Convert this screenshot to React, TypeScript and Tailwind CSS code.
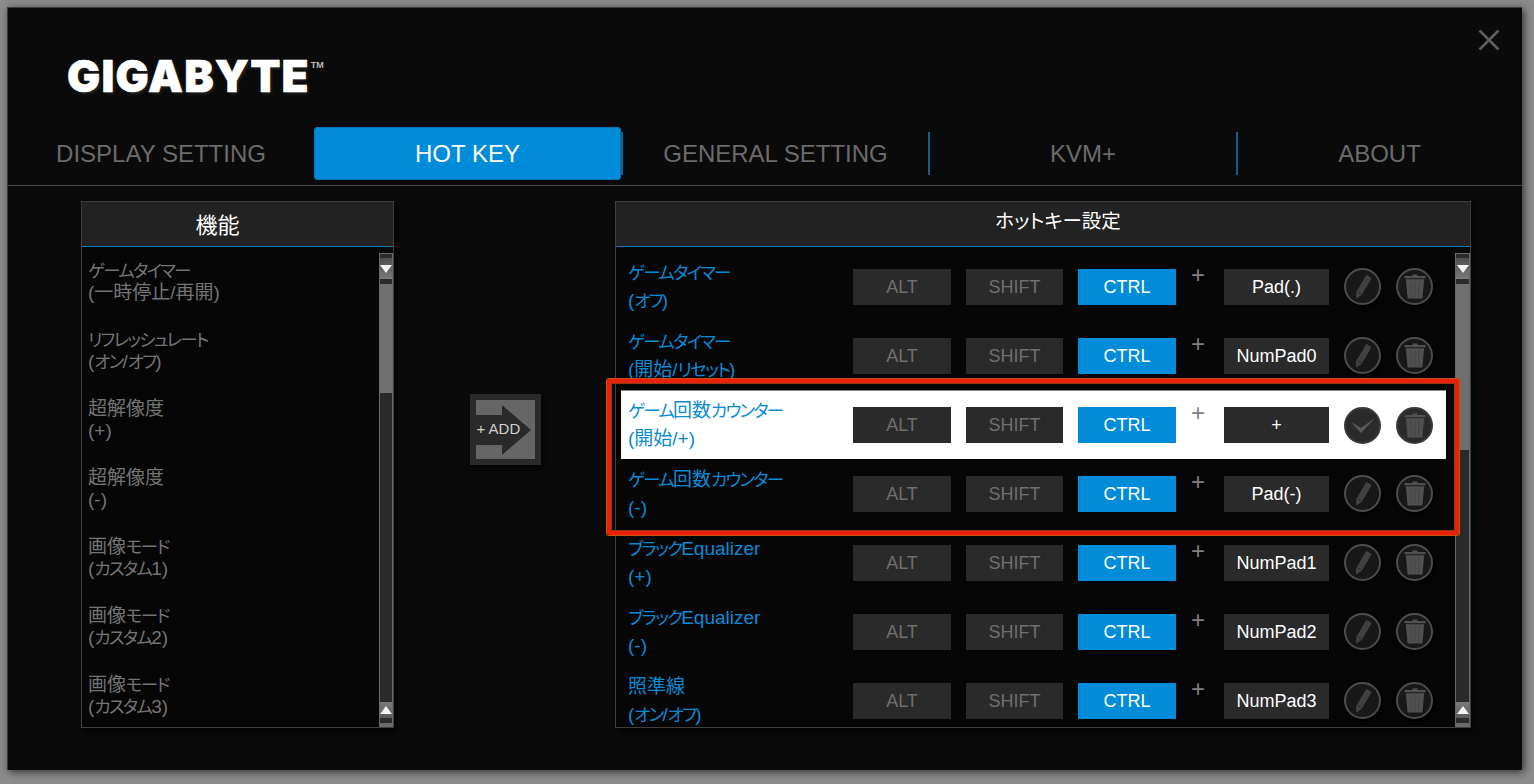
const CJK = "font-['Liberation_Sans','Noto_Sans_CJK_JP',sans-serif] [font-feature-settings:'palt']";

const functions = [
  ['ゲームタイマー', '(一時停止/再開)'],
  ['リフレッシュレート', '(オン/オフ)'],
  ['超解像度', '(+)'],
  ['超解像度', '(-)'],
  ['画像モード', '(カスタム1)'],
  ['画像モード', '(カスタム2)'],
  ['画像モード', '(カスタム3)'],
];

const hotkeys = [
  { title: 'ゲームタイマー', sub: '(オフ)', key: 'Pad(.)' },
  { title: 'ゲームタイマー', sub: '(開始/リセット)', key: 'NumPad0' },
  { title: 'ゲーム回数カウンター', sub: '(開始/+)', key: '+', editing: true },
  { title: 'ゲーム回数カウンター', sub: '(-)', key: 'Pad(-)' },
  { title: 'ブラックEqualizer', sub: '(+)', key: 'NumPad1' },
  { title: 'ブラックEqualizer', sub: '(-)', key: 'NumPad2' },
  { title: '照準線', sub: '(オン/オフ)', key: 'NumPad3' },
];

// kana in the original font runs much narrower than the kanji
function Jp({ text }: { text: string }) {
  return (
    <span>
      {text.split(/([ァ-ヶー]+)/).map((part, i) =>
        i % 2 ? (
          <span key={i} className="text-[17.5px] tracking-[-1.7px]">
            {part}
          </span>
        ) : (
          part
        ),
      )}
    </span>
  );
}

function Tab({ label, active, width }: { label: string; active?: boolean; width: string }) {
  return (
    <div
      className={`flex h-[53px] items-center justify-center text-[24px] ${width} ${
        active
          ? 'rounded-[3px] border border-[#0a74b4] bg-[#008cd8] text-white'
          : 'text-[#6b6b6b]'
      }`}
    >
      {label}
    </div>
  );
}

function Divider() {
  return <div className="h-[43px] w-[2px] shrink-0 bg-[#125f8c]" />;
}

function Arrow({ up }: { up?: boolean }) {
  return (
    <svg width="12" height="8" viewBox="0 0 12 8">
      <path d={up ? 'M6 0 L12 8 L0 8 Z' : 'M0 0 L12 0 L6 8 Z'} fill="#f4f4f4" />
    </svg>
  );
}

function Scrollbar({ thumb, width }: { thumb: string; width: string }) {
  return (
    <div className={`mt-[6px] flex shrink-0 flex-col border border-b-0 border-[#6a6a6a] bg-[#2a2a2a] ${width}`}>
      <div className="h-[4px] bg-[#2b2b2b]" />
      <div className="flex h-[21px] items-center justify-center bg-gradient-to-b from-[#4e4e4e] to-[#7a7a7a]">
        <Arrow />
      </div>
      <div className="h-[5px] bg-[#2b2b2b]" />
      <div className={`bg-[#6f6f6f] ${thumb}`} />
      <div className="flex-1" />
      <div className="flex h-[16px] items-center justify-center bg-gradient-to-b from-[#7a7a7a] to-[#5a5a5a]">
        <Arrow up />
      </div>
      <div className="h-[5px] bg-[#2b2b2b]" />
      <div className="h-[4px] bg-[#6a6a6a]" />
    </div>
  );
}

function PencilIcon() {
  return (
    <svg width="18" height="25" viewBox="0 0 18 25">
      <path d="M12.5 1.5 L17 4.2 L7.5 20.5 L2.5 24 L2.8 18 Z" fill="#414141" stroke="#484848" strokeWidth="0.8" />
      <path d="M4.2 18 L7.2 19.8" stroke="#242424" strokeWidth="1" />
    </svg>
  );
}

function TrashIcon() {
  return (
    <svg width="22" height="25" viewBox="0 0 22 25">
      <path d="M8.5 0.5 H13.5 V2 H21.5 V4.2 H0.5 V2 H8.5 Z" fill="#505050" />
      <path d="M1.8 5.2 H20.2 L18.4 24.5 H3.6 Z" fill="#505050" />
      <path d="M6.8 7.5 L7.5 23 M11 7.5 V23 M15.2 7.5 L14.5 23" stroke="#454545" strokeWidth="1" />
    </svg>
  );
}

function CheckIcon() {
  return (
    <svg width="26" height="17" viewBox="0 0 26 17">
      <path d="M1 5 L11 16 L25 1 L11 11 Z" fill="#5a5a5a" />
    </svg>
  );
}

function RoundButton({ filled, children }: { filled?: boolean; children: React.ReactNode }) {
  return (
    <div
      className={`flex h-[37px] w-[37px] shrink-0 items-center justify-center rounded-full border-2 ${
        filled
          ? 'border-[#3a3a3a] bg-[#2a2a2a]'
          : 'border-[#4c4c4c] bg-[#181818] shadow-[2px_3px_5px_rgba(0,0,0,0.7)]'
      }`}
    >
      {children}
    </div>
  );
}

function KeyCap({ label, active, width, bright }: { label: string; active?: boolean; width: string; bright?: boolean }) {
  return (
    <div
      className={`flex h-[36px] shrink-0 items-center justify-center pt-[1px] text-[18px] ${width} ${
        active ? 'bg-[#008cd8] text-white' : bright ? 'bg-[#2a2a2a] text-white' : 'bg-[#2a2a2a] text-[#6f6f6f]'
      }`}
    >
      {label}
    </div>
  );
}

export default function App() {
  return (
    <div className={`h-[784px] w-[1534px] overflow-hidden bg-[#8b8b8b] p-[7px] ${CJK}`}>
      <div className="relative flex h-[763px] w-[1515px] flex-col border-t border-l border-[#3c3c3c] bg-[#0a0a0a] shadow-[2px_2px_8px_rgba(0,0,0,0.65)]">
        {/* Close */}
        <svg className="absolute top-[21px] right-[22px]" width="22" height="22" viewBox="0 0 22 22">
          <path d="M1.5 1.5 L20.5 20.5 M20.5 1.5 L1.5 20.5" stroke="#5f5f5f" strokeWidth="2.6" />
        </svg>

        {/* Logo */}
        <div className="flex h-[119px] items-start pt-[46px] pl-[59px]">
          <span className="font-['Inter',sans-serif] text-[44px] leading-[44px] font-black tracking-[1.2px] text-white [-webkit-text-stroke:0.6px_white] [text-shadow:2px_2px_3px_rgba(255,255,255,0.1)]">
            GIGABYTE
          </span>
          <span className="mt-[7px] ml-[1px] font-['Liberation_Sans',sans-serif] text-[9px] leading-[9px] font-bold text-[#bbbbbb]">
            TM
          </span>
        </div>

        {/* Tabs */}
        <div className="flex items-center">
          <Tab label="DISPLAY SETTING" width="w-[306px]" />
          <Tab label="HOT KEY" active width="w-[307px]" />
          <Divider />
          <Tab label="GENERAL SETTING" width="w-[305px]" />
          <Divider />
          <Tab label="KVM+" width="w-[306px]" />
          <Divider />
          <Tab label="ABOUT" width="w-[283px]" />
        </div>
        <div className="mt-[5px] h-px w-full bg-[#4a4a4a]" />

        {/* Panels */}
        <div className="mt-[15px] flex pl-[73px]">
          {/* Function list */}
          <div className="flex h-[527px] w-[313px] shrink-0 flex-col border border-[#3f3f3f] shadow-[3px_3px_6px_rgba(0,0,0,0.7)]">
            <div className="flex h-[45px] shrink-0 items-center justify-center border-b border-[#0e78b8] bg-[#222222] pt-[3px] pr-[40px] text-[22px] text-white">
              機能
            </div>
            <div className="flex min-h-0 flex-1">
              <div className="min-w-0 flex-1 overflow-hidden bg-[#060606]">
                {functions.map(([title, sub], i) => (
                  <div key={i} className="flex h-[69px] flex-col justify-center pt-[1px] pl-[6px] text-[19px] leading-[22.5px] text-[#747474]">
                    <Jp text={title} />
                    <Jp text={sub} />
                  </div>
                ))}
              </div>
              <Scrollbar thumb="h-[109px]" width="w-[14px]" />
            </div>
          </div>

          {/* Add button */}
          <div className="flex w-[221px] shrink-0 justify-center pt-[193px] pl-[1px]">
            <div className="relative h-[71px] w-[71px] bg-[#2a2a2a] shadow-[2px_3px_5px_rgba(0,0,0,0.7)]">
              <svg className="absolute top-[6px] left-[6px]" width="59" height="59" viewBox="0 0 59 59">
                <rect width="59" height="59" fill="#666666" />
                <path d="M0 15 H26 V5 L55 30 L26 55 V45 H0 Z" fill="#2a2a2a" />
              </svg>
              <span className="absolute top-[25px] left-[7px] text-[15px] leading-[20px] whitespace-nowrap text-[#d0d0d0]">
                + ADD
              </span>
            </div>
          </div>

          {/* Hotkey settings */}
          <div className="flex h-[527px] w-[856px] shrink-0 flex-col border border-[#3f3f3f] shadow-[3px_3px_6px_rgba(0,0,0,0.7)]">
            <div className="flex h-[45px] shrink-0 items-center justify-center border-b border-[#0e78b8] bg-[#222222] pb-[4px] pl-[30px] text-[19.5px] text-white">
              ホットキー設定
            </div>
            <div className="flex min-h-0 flex-1">
              <div className="min-w-0 flex-1 overflow-hidden bg-[#060606] pt-[5px] pl-[5px]">
                {hotkeys.map((row, i) => (
                  <div
                    key={i}
                    className={`flex h-[69px] w-[825px] items-center pl-[7px] ${
                      row.editing ? 'border-t border-[#8a8a8a] bg-white' : ''
                    }`}
                  >
                    <div className="flex w-[225px] shrink-0 flex-col text-[19px] leading-[28px] text-[#0a8bd6]">
                      <Jp text={row.title} />
                      <Jp text={row.sub} />
                    </div>
                    <div className="flex gap-[15px]">
                      <KeyCap label="ALT" width="w-[98px]" />
                      <KeyCap label="SHIFT" width="w-[97px]" />
                      <KeyCap label="CTRL" active width="w-[98px]" />
                    </div>
                    <div className="mb-[24px] w-[48px] shrink-0 pr-[4px] text-center text-[24px] leading-[24px] text-[#808080]">+</div>
                    <KeyCap label={row.key} width="w-[105px]" bright />
                    <div className="ml-[15px] flex gap-[15px]">
                      <RoundButton filled={row.editing}>{row.editing ? <CheckIcon /> : <PencilIcon />}</RoundButton>
                      <RoundButton filled={row.editing}><TrashIcon /></RoundButton>
                    </div>
                  </div>
                ))}
              </div>
              <Scrollbar thumb="h-[166px]" width="w-[15px]" />
            </div>
          </div>
        </div>

        {/* Red annotation */}
        <div className="absolute top-[371px] left-[599px] h-[156px] w-[852px] rounded-[2px] border-[4px] border-[#ea2108] shadow-[0_0_0_1px_#c8500f,inset_0_0_0_1px_#8f3a12]" />
      </div>
    </div>
  );
}
